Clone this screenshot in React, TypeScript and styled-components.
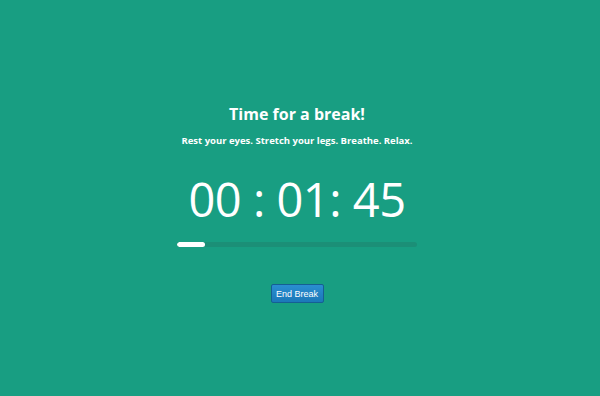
import React from "react";
import styled, { createGlobalStyle } from "styled-components";

const Global = createGlobalStyle`
  html, body { margin: 0; padding: 0; background: #189e82; }
  body { width: 600px; height: 396px; overflow: hidden; }
`;

const Page = styled.div`
  width: 594px;
  height: 396px;
  background: #189e82;
  display: flex;
  flex-direction: column;
  align-items: center;
  font-family: "Open Sans", "Noto Sans", sans-serif;
  color: #ffffff;
  box-sizing: border-box;
  padding-top: 102px;
`;

const Title = styled.h1`
  margin: 0;
  font-size: 16px;
  font-weight: 700;
  line-height: 24px;
`;

const Subtitle = styled.p`
  margin: 8px 0 0;
  font-size: 9.5px;
  font-weight: 700;
  line-height: 14px;
`;

const Timer = styled.div`
  margin-top: 23px;
  font-size: 47px;
  font-weight: 400;
  line-height: 56px;
  letter-spacing: -0.5px;
  white-space: pre;
`;

const Track = styled.div`
  margin-top: 15px;
  width: 240px;
  height: 5px;
  border-radius: 3px;
  background: #1b8f77;
  overflow: hidden;
`;

const Fill = styled.div`
  height: 100%;
  background: #ffffff;
  border-radius: 3px;
`;

const Button = styled.button`
  margin-top: 37px;
  width: 53px;
  height: 19px;
  padding: 0;
  font-family: "Liberation Sans", Arial, sans-serif;
  font-size: 9px;
  color: #ffffff;
  background: linear-gradient(#2a8ed0, #1b78b8);
  border: 1px solid #155f93;
  border-radius: 2px;
  cursor: pointer;
`;

export default function App() {
  const progress = 28 / 240;
  return (
    <>
      <Global />
      <Page>
        <Title>Time for a break!</Title>
        <Subtitle>Rest your eyes. Stretch your legs. Breathe. Relax.</Subtitle>
        <Timer>00 : 01: 45</Timer>
        <Track>
          <Fill style={{ width: `${progress * 100}%` }} />
        </Track>
        <Button>End Break</Button>
      </Page>
    </>
  );
}
